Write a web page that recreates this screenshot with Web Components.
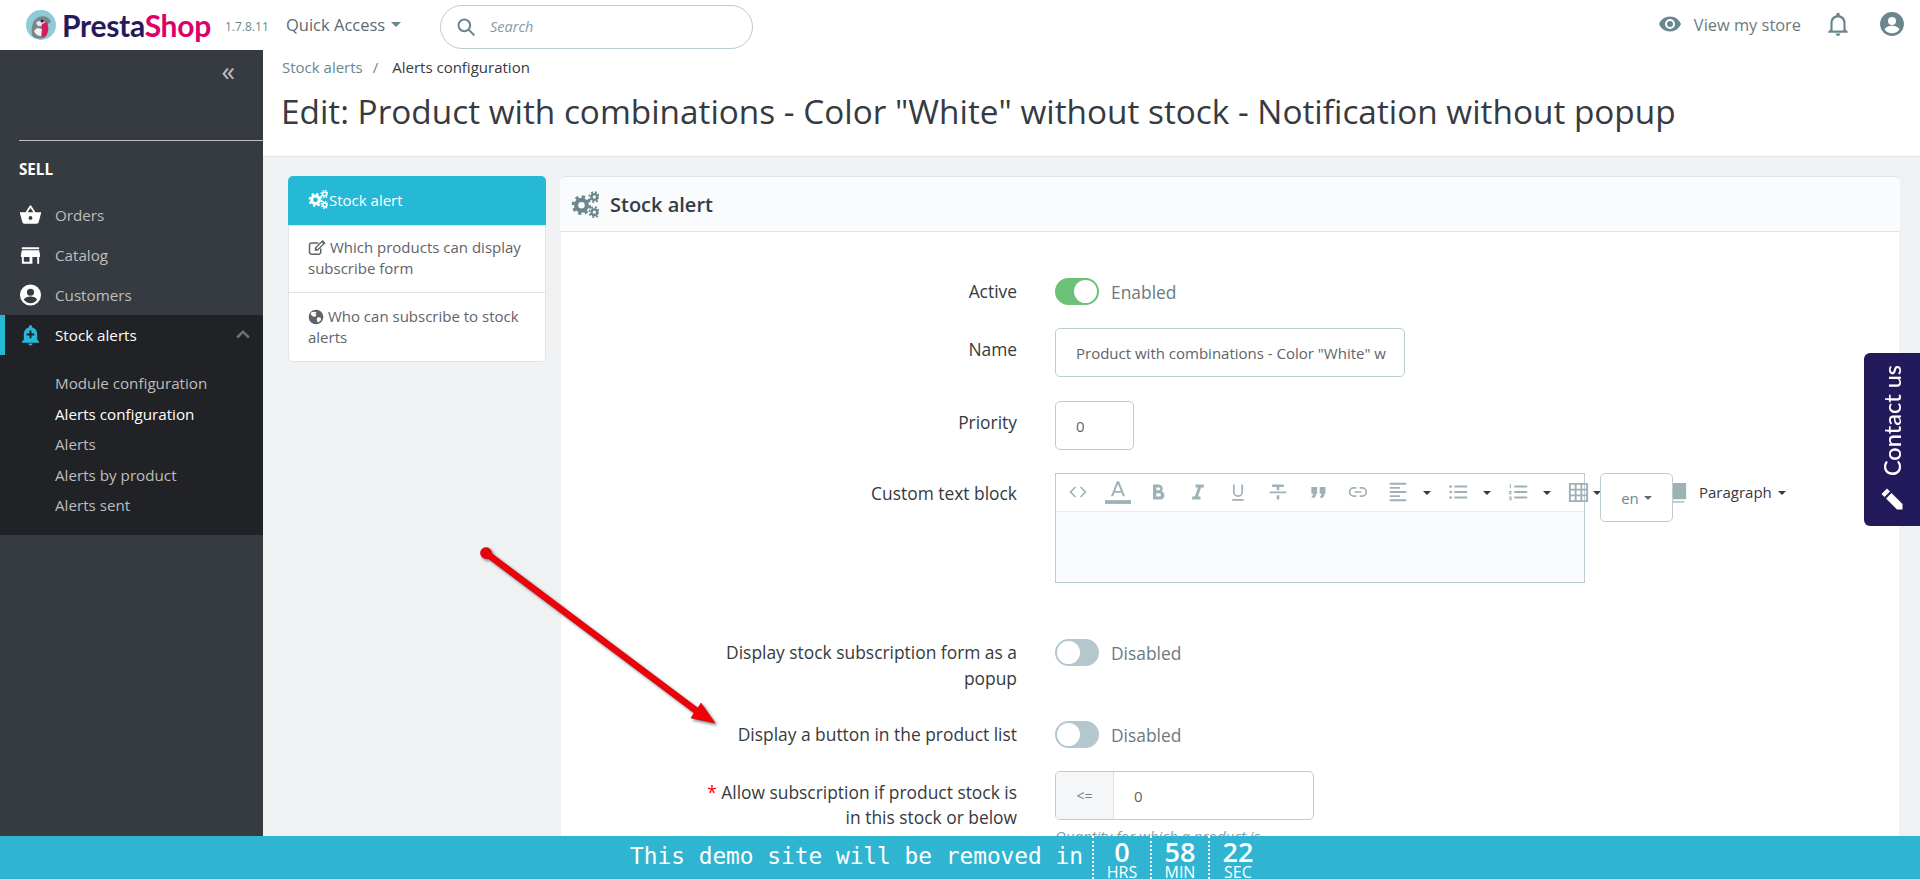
<!DOCTYPE html>
<html lang="en">
<head>
<meta charset="utf-8">
<title>Stock alert</title>
<style>
html,body{margin:0;height:879px;overflow:hidden}
body{font-family:"Open Sans",sans-serif;font-size:15px;color:#363a41;background:#eff1f2}
</style>
</head>
<body>
<ps-app></ps-app>
<script>
const ICONS={
  cogs:'<g fill="none" stroke="currentColor"><circle cx="9" cy="13" r="4.6" stroke-width="3.6"/><circle cx="9" cy="13" r="7.2" stroke-width="2.4" stroke-dasharray="2.83 2.83"/><circle cx="20" cy="6" r="2.4" stroke-width="2"/><circle cx="20" cy="6" r="4.2" stroke-width="1.7" stroke-dasharray="1.65 1.65"/><circle cx="20" cy="19" r="2.4" stroke-width="2"/><circle cx="20" cy="19" r="4.2" stroke-width="1.7" stroke-dasharray="1.65 1.65"/></g>',
  edit:'<path fill="none" stroke="currentColor" stroke-width="2" d="M17 14v5a2.5 2.5 0 0 1-2.5 2.5h-10A2.5 2.5 0 0 1 2 19V9a2.5 2.5 0 0 1 2.5-2.5H14"/><path fill="currentColor" d="M9 17v-4L19.5 2.5l4 4L13 17zM11 13.500l1.500 1.500L20 7.500 18.500 6z" fill-rule="evenodd"/>',
  globe:'<path fill="currentColor" d="M12 1a11 11 0 1 0 0 22 11 11 0 0 0 0-22zm-2 3 3 1-2 2 2 2-3 3-3-1-3-3 1-3zm5 8 4 1 1 3-4 4-2-1-1-4z" fill-rule="evenodd"/>',
  basket:'<path fill="currentColor" d="M17.200 9 12.800 2.400a1 1 0 0 0-1.600 0L6.800 9H2a1 1 0 0 0-1 1.300l2.500 9.200A2 2 0 0 0 5.500 21h13a2 2 0 0 0 2-1.500l2.500-9.200A1 1 0 0 0 22 9zM9 9l3-4.400L15 9zm3 8a2 2 0 1 1 0-4 2 2 0 0 1 0 4z" fill-rule="evenodd"/>',
  store:'<path fill="currentColor" d="M3 4h18v2H3zM2 14v-2l1-5h18l1 5v2h-1v7h-2v-7h-5v7H3v-7zm3 0v5h6v-5z" fill-rule="evenodd"/>',
  person:'<path fill="currentColor" d="M12 1a11 11 0 1 0 0 22 11 11 0 0 0 0-22zm0 4.500a3.700 3.700 0 1 1 0 7.400 3.700 3.700 0 0 1 0-7.400zM12 20.500a8.500 8.500 0 0 1-6.800-3.500c.1-2.300 4.500-3.500 6.800-3.500s6.700 1.200 6.800 3.500a8.500 8.500 0 0 1-6.800 3.500z" fill-rule="evenodd"/>',
  bellplus:'<path fill="currentColor" d="M12 23a2.200 2.200 0 0 0 2.200-2.200H9.800A2.200 2.200 0 0 0 12 23zm7-6v-6c0-3.500-2-6.300-5.400-7.100v-.8a1.600 1.600 0 0 0-3.200 0v.8C7 4.700 5 7.500 5 11v6l-2 2v1h18v-1zm-3-4.600h-3v3h-2v-3H8v-2h3v-3h2v3h3z" fill-rule="evenodd"/>',
  bell:'<path fill="currentColor" d="M12 23a2.200 2.200 0 0 0 2.200-2.200H9.800A2.200 2.200 0 0 0 12 23zm7-6v-6c0-3.500-2-6.300-5.400-7.100v-.8a1.600 1.600 0 0 0-3.200 0v.8C7 4.700 5 7.500 5 11v6l-2 2v1h18v-1zm-2 1H7v-7c0-2.700 2.200-5 5-5s5 2.300 5 5z" fill-rule="evenodd"/>',
  eye:'<path fill="currentColor" d="M12 4.500C7 4.500 2.700 7.600 1 12c1.700 4.400 6 7.500 11 7.500s9.300-3.100 11-7.500c-1.700-4.400-6-7.500-11-7.500zm0 12.500a5 5 0 1 1 0-10 5 5 0 0 1 0 10zm0-8a3 3 0 1 0 0 6 3 3 0 0 0 0-6z" fill-rule="evenodd"/>',
  search:'<path fill="none" stroke="currentColor" stroke-width="2.400" d="M10 3a7 7 0 1 1 0 14 7 7 0 0 1 0-14zM15 15l7 7"/>',
  code:'<path fill="none" stroke="currentColor" stroke-width="2" d="M9 6l-6 6 6 6M15 6l6 6-6 6"/>',
  color:'<path fill="currentColor" d="M11 2h2l5.500 14h-2l-1.200-3.300H8.700L7.500 16h-2zm-1.600 9h5.200L12 4.500z" fill-rule="evenodd"/><path fill="currentColor" d="M0 19.500h24V23H0z"/>',
  bold:'<path fill="currentColor" d="M6 3h7a5 5 0 0 1 3.500 8.400A5 5 0 0 1 14 21H6zm4 3.500v3.500h3a1.700 1.700 0 0 0 0-3.500zm0 7v4h3.500a2 2 0 0 0 0-4z" fill-rule="evenodd"/>',
  italic:'<path fill="currentColor" d="M9 3h10v3.500h-3.300L12 17.500h3V21H5v-3.500h3.300L12 6.500H9z"/>',
  underline:'<path fill="none" stroke="currentColor" stroke-width="2" d="M7 3v9a5 5 0 0 0 10 0V3M5 21.500h14"/>',
  strike:'<path fill="currentColor" d="M5 3h14v3h-5.500v4h-3V6H5zM2 11.500h20v2H2zM10.500 16h3v5h-3z"/>',
  quote:'<path fill="currentColor" d="M4 6h7v7l-3 6H4l2.500-5H4zM14 6h7v7l-3 6h-4l2.500-5H14z"/>',
  link:'<path fill="none" stroke="currentColor" stroke-width="2" d="M10 7H7a5 5 0 0 0 0 10h3M14 7h3a5 5 0 0 1 0 10h-3M8 12h8"/>',
  align:'<path fill="currentColor" d="M3 2h18v2H3zM3 6.500h11v2H3zM3 11h18v2H3zM3 15.500h11v2H3zM3 20h18v2H3z"/>',
  ul:'<path fill="currentColor" d="M8 5h14v2H8zM8 11h14v2H8zM8 17h14v2H8z"/><circle fill="currentColor" cx="4" cy="6" r="1.500"/><circle fill="currentColor" cx="4" cy="12" r="1.500"/><circle fill="currentColor" cx="4" cy="18" r="1.500"/>',
  ol:'<path fill="currentColor" d="M8 5h14v2H8zM8 11h14v2H8zM8 17h14v2H8zM3 3h1.200v5H3zM2 11h3v1l-1.500 1.500H5v1H2v-1l1.500-1.500H2zM2 17h3v4H2v-1h2v-.5H3v-1h1V18H2z"/>',
  table:'<path fill="currentColor" d="M3 2h18a1 1 0 0 1 1 1v18a1 1 0 0 1-1 1H3a1 1 0 0 1-1-1V3a1 1 0 0 1 1-1zm1 2v4.200h4V4zm6 0v4.200h4V4zm6 0v4.200h4V4zM4 10v4h4v-4zm6 0v4h4v-4zm6 0v4h4v-4zM4 16v4h4v-4zm6 0v4h4v-4zm6 0v4h4v-4z" fill-rule="evenodd"/>',
  image:'<path fill="currentColor" d="M3 2h18v17H3zM5 21h14v1.500H5z"/>',
  chevron:'<path fill="none" stroke="currentColor" stroke-width="3" d="M5 15l7-7 7 7"/>',
  pencil:'<path fill="currentColor" d="M7 1.500 1.500 7l3 3L10 4.500zM11.500 6 6 11.500 17 22.500h5.500V17z"/>'
}
const SIZES={color:26,align:22,ul:22,ol:22,table:23,image:23}

class PsIcon extends HTMLElement{
  static get observedAttributes(){return["name","size"]}
  constructor(){super();this.attachShadow({mode:"open"});this.render()}
  attributeChangedCallback(){this.render()}
  render(){
    const n=this.getAttribute("name"),s=this.getAttribute("size")||"16";
    this.shadowRoot.innerHTML=`<style>:host{display:inline-flex;line-height:0;flex:none}svg{display:block}</style>
    <svg width="${s}" height="${s}" viewBox="0 0 24 24">${ICONS[n]||""}</svg>`;
  }
}
customElements.define("ps-icon",PsIcon);

class PsHeader extends HTMLElement{
  constructor(){
    super();this.attachShadow({mode:"open"});
    this.shadowRoot.innerHTML=`<style>
      :host{display:flex;align-items:center;height:50px;background:#fff;position:relative;color:#6c868e}
      .logo{display:flex;align-items:center;margin-left:26px;width:186px;flex:none}
      .brand{font:700 30px Lato,"Open Sans",sans-serif;letter-spacing:-.3px;margin-left:6px;line-height:1;margin-top:-1px}
      .presta{color:#251b5b}.shop{color:#df0067}
      .ver{font-size:12px;color:#6c868e;margin-left:13px;width:61px;flex:none;padding-top:2px}
      .qa{font-size:16.500px;color:#5b6b72;display:flex;align-items:center;gap:6px;width:154px;flex:none;margin-top:-2px}
      .caret{width:0;height:0;border:5px solid transparent;border-top-color:#6c868e;border-bottom:0}
      .search{width:313px;height:44px;box-sizing:border-box;border:1px solid #bbcdd2;border-radius:22px;display:flex;align-items:center;padding-left:15px;gap:14px;flex:none;margin-top:3px}
      .search span{font-style:italic;font-size:14.500px;color:#8a9ba1}
      .right{margin-left:auto;display:flex;align-items:center;padding-right:15px;margin-top:-2px}
      .store{font-size:16.400px;color:#6c7a80;margin:0 24px 0 12px}
      .bell{margin-right:28px}
    </style>
    <div class="logo">
      <svg width="30" height="32" viewBox="0 0 30 32"><circle cx="15" cy="16" r="15" fill="#8fcbd6"/><path d="M6 26c-1-7 0-15 7-18 6-2 11 1 12 5l-5 3 1 10c-3 5-12 5-15 0z" fill="#7d8489"/><path d="M10 14c2-3 7-3 9 0l-3 3h-4z" fill="#e8e8e8"/><path d="M16 15l5-2 1 4c1 4 0 9-5 12-2-4-2-10-1-14z" fill="#d61a62"/><path d="M8 22c1 3 4 5 7 5l1-7-5-1z" fill="#f0f2f2"/><circle cx="16" cy="12" r="1.500" fill="#251b5b"/></svg>
      <span class="brand"><span class="presta">Presta</span><span class="shop">Shop</span></span>
    </div>
    <span class="ver">1.7.8.11</span>
    <span class="qa">Quick Access <i class="caret"></i></span>
    <div class="search"><ps-icon name="search" size="20"></ps-icon><span>Search</span></div>
    <div class="right">
      <ps-icon name="eye" size="24"></ps-icon><span class="store">View my store</span>
      <ps-icon class="bell" name="bell" size="26"></ps-icon>
      <ps-icon name="person" size="26"></ps-icon>
    </div>`;
  }
}
customElements.define("ps-header",PsHeader);

class PsNavItem extends HTMLElement{
  constructor(){
    super();this.attachShadow({mode:"open"});
    this.shadowRoot.innerHTML=`<style>
      :host{display:flex;align-items:center;height:40px;color:#bebebe;font-size:15.200px;padding-left:19px;gap:13px;box-sizing:border-box}
      :host([active]){background:#202226;color:#fff;border-left:5px solid #25b9d7;padding-left:14px}
      ps-icon{color:#fff;width:23px;justify-content:center}
      :host([active]) ps-icon{color:#25b9d7}
      .end{margin-left:auto;margin-right:9px;color:#6c6f75;display:inline-flex}
    </style><ps-icon size="24"></ps-icon><slot></slot><span class="end"></span>`;
    this.shadowRoot.querySelector("ps-icon").setAttribute("name",this.getAttribute("icon"));
    if(this.hasAttribute("active"))this.shadowRoot.querySelector(".end").innerHTML='<ps-icon name="chevron" size="20" style="color:#6c6f75"></ps-icon>';
  }
}
customElements.define("ps-nav-item",PsNavItem);

class PsSidebar extends HTMLElement{
  constructor(){
    super();this.attachShadow({mode:"open"});
    this.shadowRoot.innerHTML=`<style>
      :host{display:block;width:263px;flex:none;background:#363a41;color:#bebebe;font-size:15.200px}
      .collapse{padding:7px 28px 0 0;box-sizing:border-box;text-align:right;font-size:27px;line-height:28px;color:#bebebe;height:90px}
      .tab{border-top:1px solid #bebebe;margin-left:19px;padding-top:19px;height:19px;color:#fff;font-weight:700;line-height:19px;margin-bottom:16px;box-sizing:content-box}
      .sub{background:#202226;padding:13px 0 15px 55px;height:152px;box-sizing:content-box;display:flex;flex-direction:column;justify-content:space-between;line-height:30.500px}
      .sub .on{color:#fff}
    </style>
    <div class="collapse">«</div>
    <div class="tab">SELL</div>
    <ps-nav-item icon="basket">Orders</ps-nav-item>
    <ps-nav-item icon="store">Catalog</ps-nav-item>
    <ps-nav-item icon="person">Customers</ps-nav-item>
    <ps-nav-item icon="bellplus" active>Stock alerts</ps-nav-item>
    <div class="sub"><span>Module configuration</span><span class="on">Alerts configuration</span><span>Alerts</span><span>Alerts by product</span><span>Alerts sent</span></div>`;
  }
}
customElements.define("ps-sidebar",PsSidebar);

class PsPageHead extends HTMLElement{
  constructor(){
    super();this.attachShadow({mode:"open"});
    this.shadowRoot.innerHTML=`<style>
      :host{display:block;height:107px;box-sizing:border-box;background:#fff;border-bottom:1px solid #dfe3e5;padding:6px 0 0 19px}
      .crumb{font-size:15px;line-height:22px;color:#6c868e;display:flex;gap:10px}
      .crumb b{font-weight:400;color:#363a41;margin-left:4px}
      h1{margin:11px 0 0 -1px;font-size:33.350px;font-weight:400;line-height:44px;color:#363a41;white-space:nowrap}
    </style>
    <div class="crumb"><span>Stock alerts</span><span>/</span><b>Alerts configuration</b></div>
    <h1><slot></slot></h1>`;
  }
}
customElements.define("ps-page-head",PsPageHead);

class PsTabs extends HTMLElement{
  constructor(){
    super();this.attachShadow({mode:"open"});
    this.shadowRoot.innerHTML=`<style>
      :host{display:block;width:258px;flex:none;align-self:flex-start;background:#fff;border-radius:5px;box-shadow:0 0 0 1px #dfe3e5 inset;overflow:hidden;font-size:15px;line-height:21px;color:#5f6468}
      .t{padding:11px 20px 13px;border-top:1px solid #dfe3e5}
      .t:last-child{padding:13px 20px 14px}
      .t.a{background:#25b9d7;color:#fff;padding:14px 20px;border:0}
      ps-icon{display:inline-flex;vertical-align:-3px;margin:-3px 0}
      .a ps-icon{margin-right:1px}
    </style>
    <div class="t a"><ps-icon name="cogs" size="20"></ps-icon>Stock alert</div>
    <div class="t"><ps-icon name="edit" size="18"></ps-icon> Which products can display subscribe form</div>
    <div class="t"><ps-icon name="globe" size="16"></ps-icon> Who can subscribe to stock alerts</div>`;
  }
}
customElements.define("ps-tabs",PsTabs);

class PsToggle extends HTMLElement{
  constructor(){
    super();this.attachShadow({mode:"open"});
    this.shadowRoot.innerHTML=`<style>
      :host{display:flex;align-items:center;gap:12px;font-size:17.400px;line-height:26px;color:#6c7a80;height:27px}
      .sw{width:44px;height:27px;border-radius:14px;background:#b3c7cd;position:relative;flex:none}
      .sw i{position:absolute;top:2px;left:2px;width:23px;height:23px;border-radius:50%;background:#fff}
      :host([on]) .sw{background:#6cc078}
      :host([on]) .sw i{left:19px}
    </style><span class="sw"><i></i></span><slot></slot>`;
  }
}
customElements.define("ps-toggle",PsToggle);

class PsRow extends HTMLElement{
  constructor(){
    super();this.attachShadow({mode:"open"});
    this.shadowRoot.innerHTML=`<style>
      :host{display:grid;grid-template-columns:457px 1fr;column-gap:38px;margin-top:var(--gap,24px)}
      .l{text-align:right;font-size:17.400px;line-height:var(--lh,26px);color:#363a41;padding-top:var(--lp,0)}
    </style><div class="l"><slot name="label"></slot></div><div><slot></slot></div>`;
  }
}
customElements.define("ps-row",PsRow);

class PsEditor extends HTMLElement{
  constructor(){
    super();this.attachShadow({mode:"open"});
    const tool=n=>`<span class="b"><ps-icon name="${n}" size="${SIZES[n]||20}"></ps-icon></span>`;
    const caret=`<i class="c"></i>`;
    this.shadowRoot.innerHTML=`<style>
      :host{display:block;width:530px;height:110px;box-sizing:border-box;border:1px solid #bbcdd2;position:relative;background:#fafbfc}
      .top{position:absolute;left:0;right:0;top:0;height:38px;background:#fff;border-bottom:1px solid #e6ecee;box-sizing:border-box}
      .bar{position:relative;height:36px;display:flex;align-items:center;padding-left:2px;color:#9fb1b8;white-space:nowrap;width:max-content}
      .b{display:flex;justify-content:center;flex:none;width:40px}
      .c{width:0;height:0;border:4.500px solid transparent;border-top-color:#363a41;border-bottom:0;flex:none;margin-top:1px}
      .g{display:flex;align-items:center;width:60px;flex:none}
      .g .c{margin-left:5px}
      .g.tb .c{margin-left:-5px}
      .p{color:#363a41;font-size:15px;margin-left:2px;display:flex;align-items:center;gap:6px}
      .lang{position:absolute;left:544px;top:-1px;width:73px;height:49px;box-sizing:border-box;border:1px solid #bbcdd2;border-radius:5px;background:#fff;color:#6c868e;font-size:15px;display:flex;align-items:center;justify-content:center;gap:5px}
      .lang .c{border-top-color:#5b6b72}
    </style>
    <div class="top"></div>
    <div class="bar">
      ${tool("code")}${tool("color")}${tool("bold")}${tool("italic")}${tool("underline")}${tool("strike")}${tool("quote")}${tool("link")}
      <span class="g">${tool("align")}${caret}</span><span class="g">${tool("ul")}${caret}</span><span class="g">${tool("ol")}${caret}</span>
      <span class="g tb" style="width:59px">${tool("table")}${caret}</span>
      ${tool("link")}${tool("image")}
      <span class="p">Paragraph ${caret}</span>
    </div>
    <div class="lang">en <i class="c"></i></div>`;
  }
}
customElements.define("ps-editor",PsEditor);

class PsInput extends HTMLElement{
  constructor(){
    super();this.attachShadow({mode:"open"});
    this.shadowRoot.innerHTML=`<style>
      :host{display:flex;height:49px;box-sizing:border-box;border:1px solid #bbcdd2;border-radius:5px;background:#fff;font-size:15px;color:#5f6468;overflow:hidden;align-items:stretch}
      .add{width:57px;flex:none;background:#f4f6f7;border-right:1px solid #dbe3e6;display:none;align-items:center;justify-content:center;color:#6c868e;font-size:14px}
      :host([addon]) .add{display:flex}
      .v{margin:0 16px 0 20px;display:flex;align-items:center;white-space:nowrap;overflow:hidden;flex:1}
    </style><span class="add"></span><span class="v"><slot></slot></span>`;
    this.shadowRoot.querySelector(".add").textContent=this.getAttribute("addon")||"";
  }
}
customElements.define("ps-input",PsInput);

class PsPanel extends HTMLElement{
  constructor(){
    super();this.attachShadow({mode:"open"});
    this.shadowRoot.innerHTML=`<style>
      :host{display:block;flex:1;background:#fff;border-radius:5px 5px 0 0;align-self:flex-start;box-shadow:0 0 0 1px #f1f3f4 inset}
      header{height:56px;box-sizing:border-box;background:#fafbfc;border-top:1px solid #dfe3e5;border-bottom:1px solid #dbe6e9;border-radius:5px 5px 0 0;display:flex;align-items:center;padding-left:11px;gap:11px;font-size:20px;font-weight:600;color:#363a41}
      header ps-icon{color:#6c868e}
      .body{padding:22px 0 80px}
    </style>
    <header><ps-icon name="cogs" size="28"></ps-icon>Stock alert</header>
    <div class="body"><slot></slot></div>`;
  }
}
customElements.define("ps-panel",PsPanel);

class PsContact extends HTMLElement{
  constructor(){
    super();this.attachShadow({mode:"open"});
    this.shadowRoot.innerHTML=`<style>
      :host{position:fixed;right:0;top:353px;width:56px;height:173px;background:#231a5c;border-radius:6px 0 0 6px;color:#fff;display:flex;flex-direction:column;align-items:center;padding-top:12px;gap:11px;box-sizing:border-box}
      span{writing-mode:vertical-rl;transform:rotate(180deg);font:500 23.500px Lato,"Open Sans",sans-serif;white-space:nowrap}
    </style><span>Contact us</span><ps-icon name="pencil" size="24"></ps-icon>`;
  }
}
customElements.define("ps-contact",PsContact);

class PsDemoBar extends HTMLElement{
  constructor(){
    super();this.attachShadow({mode:"open"});
    const cell=(a,b)=>`<div class="cell"><b>${a}</b><small>${b}</small></div>`;
    this.shadowRoot.innerHTML=`<style>
      :host{position:fixed;left:0;right:0;bottom:0;height:43px;background:#2fb5d2;color:#fff;display:flex;justify-content:center;overflow:hidden;padding-right:24px;box-sizing:border-box}
      .txt{font:22.800px/41px "DejaVu Sans Mono","Liberation Mono",monospace;margin-right:9px;white-space:nowrap}
      .cell{width:56px;border-left:2px dotted #fff;text-align:center;display:flex;flex-direction:column;align-items:center}
      b{font-size:27px;line-height:26px;font-weight:600;margin-top:3px}
      small{font-size:16px;line-height:14px}
    </style>
    <div class="txt">This demo site will be removed in</div>${cell(0,"HRS")}${cell(58,"MIN")}${cell(22,"SEC")}`;
  }
}
customElements.define("ps-demo-bar",PsDemoBar);

class PsArrow extends HTMLElement{
  constructor(){
    super();this.attachShadow({mode:"open"});
    this.shadowRoot.innerHTML=`<style>
      :host{position:fixed;left:0;top:0;width:1920px;height:879px;pointer-events:none}
      svg{display:block}
    </style>
    <svg width="1920" height="879"><g style="filter:drop-shadow(2px 2px 1.500px rgba(0,0,0,.5))" fill="#f00008" stroke="#c0000a" stroke-width=".6">
      <circle cx="486" cy="553" r="5.500"/>
      <path d="M484.200 555.400 487.800 550.600 697.800 708.100 701 703 715 723 691 718 694.200 712.900z"/>
    </g></svg>`;
  }
}
customElements.define("ps-arrow",PsArrow);

class PsApp extends HTMLElement{
  constructor(){
    super();this.attachShadow({mode:"open"});
    this.shadowRoot.innerHTML=`<style>
      :host{display:flex;flex-direction:column;height:879px;overflow:hidden}
      .wrap{flex:1;display:flex;min-height:0}
      main{flex:1;min-width:0;display:flex;flex-direction:column}
      .content{display:flex;gap:14px;padding:19px 20px 0 25px;flex:1;min-height:0;overflow:hidden}
      .help{font-size:15px;line-height:20px;font-style:italic;color:#8a9ba1;margin-top:6px}
      .req{color:#f00}
      ps-input.name{width:350px}
      ps-input.pr{width:79px}
      ps-input.st{width:259px}
    </style>
    <ps-header></ps-header>
    <div class="wrap">
      <ps-sidebar></ps-sidebar>
      <main>
        <ps-page-head>Edit: Product with combinations - Color "White" without stock - Notification without popup</ps-page-head>
        <div class="content">
          <ps-tabs></ps-tabs>
          <ps-panel>
            <ps-row><span slot="label">Active</span><ps-toggle on>Enabled</ps-toggle></ps-row>
            <ps-row style="--gap:23px;--lp:8px"><span slot="label">Name</span><ps-input class="name">Product with combinations - Color "White" w</ps-input></ps-row>
            <ps-row style="--lp:8px"><span slot="label">Priority</span><ps-input class="pr">0</ps-input></ps-row>
            <ps-row style="--gap:23px;--lp:7px"><span slot="label">Custom text block</span><ps-editor></ps-editor></ps-row>
            <ps-row style="--gap:56px"><span slot="label">Display stock subscription form as a<br>popup</span><ps-toggle>Disabled</ps-toggle></ps-row>
            <ps-row style="--gap:30px"><span slot="label">Display a button in the product list</span><ps-toggle>Disabled</ps-toggle></ps-row>
            <ps-row style="--gap:23px;--lp:9px;--lh:25px"><span slot="label"><span class="req">*</span> Allow subscription if product stock is<br>in this stock or below</span><div><ps-input class="st" addon="&lt;=">0</ps-input><div class="help">Quantity for which a product is</div></div></ps-row>
          </ps-panel>
        </div>
      </main>
    </div>
    <ps-arrow></ps-arrow>
    <ps-contact></ps-contact>
    <ps-demo-bar></ps-demo-bar>`;
  }
}
customElements.define("ps-app",PsApp);
</script>
</body>
</html>
